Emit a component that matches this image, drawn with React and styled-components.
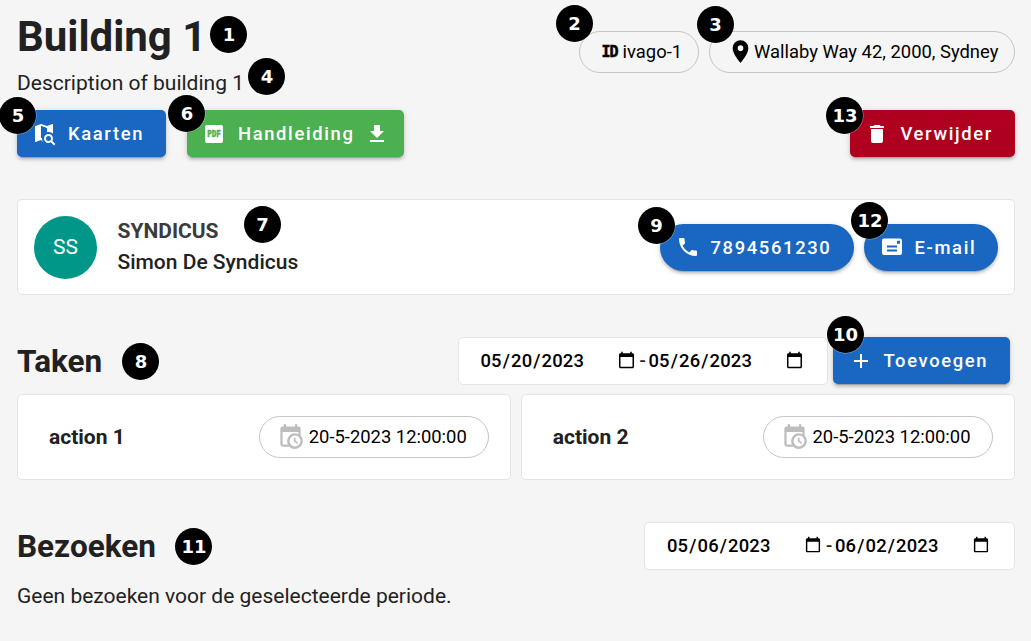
import React from 'react';
import styled, { createGlobalStyle } from 'styled-components';

const GlobalStyle = createGlobalStyle`
  * { box-sizing: border-box; }
  body { margin: 0; background: #f5f5f5; color: #212121; font-family: Roboto, sans-serif; overflow: hidden; }
  h1, h2, p { margin: 0; }
`;

const Page = styled.main`
  width: 1031px;
  height: 641px;
  padding: 10px 16.5px 0 17px;
  background: #f5f5f5;
`;
const Header = styled.header`
  display: flex;
  justify-content: space-between;
  height: 100px;
`;
const Title = styled.h1`
  font-size: 42px;
  line-height: 52px;
  padding-top: 1px;
  font-weight: 700;
`;
const Description = styled.p`
  font-size: 21px;
  line-height: 32px;
  margin-top: ${p => p.$top || 4}px;
`;
const Chips = styled.div`
  display: flex;
  gap: 10px;
  padding-top: 21px;
`;
const Chip = styled.div`
  position: relative;
  display: flex;
  align-items: center;
  gap: ${p => p.$gap || 5}px;
  width: ${p => p.$width}px;
  height: 42px;
  padding-left: ${p => p.$pad}px;
  padding-bottom: 1px;
  border: 1px solid #c6c6c6;
  border-radius: 21px;
  color: #000;
  font-size: 18.4px;
  white-space: nowrap;
`;
const Row = styled.div`
  display: flex;
  align-items: center;
  gap: ${p => p.$gap || 0}px;
`;
const Spread = styled(Row)`
  justify-content: space-between;
`;
const tones = { blue: '#1967c0', green: '#4caf50', red: '#b00020' };
const Button = styled.button`
  position: relative;
  display: flex;
  align-items: center;
  width: ${p => p.$width}px;
  height: 47px;
  padding: 0 0 0 ${p => p.$pad || 16}px;
  border: 0;
  border-radius: ${p => (p.$round ? 24 : 5)}px;
  background: ${p => tones[p.$tone || 'blue']};
  color: #fff;
  font: 500 18.4px Roboto, sans-serif;
  letter-spacing: 1.64px;
  white-space: nowrap;
  box-shadow: 0 4px 1px -3px rgba(0,0,0,.2), 0 3px 3px rgba(0,0,0,.14), 0 1px 6px rgba(0,0,0,.12);
`;
const Label = styled.span`
  margin: 0 ${p => p.$right || 0}px 0 ${p => p.$left || 11}px;
`;
const Badge = styled.span`
  position: absolute;
  left: ${p => p.$x}px;
  top: ${p => p.$y}px;
  width: 37px;
  height: 37px;
  border-radius: 50%;
  background: #000;
  box-shadow: 0 0 0 .5px rgba(255,255,255,.5);
  color: #fff;
  font: 700 18px/37px "DejaVu Sans", sans-serif;
  letter-spacing: 0;
  text-align: center;
  padding-left: 1px;
`;
const Anchor = styled.div`
  position: relative;
  width: fit-content;
`;
const Card = styled.section`
  display: flex;
  align-items: center;
  justify-content: space-between;
  border: 1px solid #e4e4e4;
  border-radius: 5px;
  background: #fff;
`;
const ContactCard = styled(Card)`
  height: 96px;
  margin-top: 42px;
  padding: 0 16px;
`;
const Avatar = styled.div`
  width: 63px;
  height: 63px;
  border-radius: 50%;
  background: #009688;
  color: #fff;
  font-size: 21px;
  line-height: 63px;
  text-align: center;
`;
const Person = styled.div`
  position: relative;
  font-size: 21px;
  font-weight: 500;
  line-height: 31.5px;
`;
const Role = styled.div`
  font-weight: 700;
  color: #3b3b3b;
`;
const SectionHead = styled(Spread)`
  height: 48px;
  margin-top: 42px;
  padding-right: ${p => p.$right || 0}px;
`;
const Heading = styled.h2`
  font-size: 31.5px;
  line-height: 42px;
  padding-top: 1px;
  font-weight: 700;
`;
const Filters = styled(Row)`
  align-items: flex-start;
`;
const DateRange = styled(Card)`
  width: ${p => p.$width}px;
  height: 48px;
  padding: 0 0 2px 21px;
  justify-content: flex-start;
  font-size: 18.4px;
  font-weight: 500;
`;
const DateInput = styled.input`
  width: 158px;
  padding: 0;
  margin: 0;
  border: 0;
  background: transparent;
  color: #000;
  font: 500 18.4px Roboto, sans-serif;
  letter-spacing: .15px;
`;
const Dash = styled.span`
  width: 10px;
  text-align: center;
`;
const Tasks = styled.div`
  display: grid;
  grid-template-columns: 1fr 1fr;
  gap: 10px;
  margin-top: 9px;
`;
const Task = styled(Card)`
  height: 86px;
  padding: 0 21px 0 31px;
  font-size: 21px;
  font-weight: 700;
`;
const TaskChip = styled(Chip)`
  font-weight: 400;
`;
const Svg = styled.svg`
  display: block;
  flex: none;
  fill: currentColor;
`;
const ClockTint = styled.span`
  color: #bdbdbd;
`;
const IdMark = styled.span`
  font: 700 15px "DejaVu Sans Mono", monospace;
  letter-spacing: -1px;
  -webkit-text-stroke: .5px #000;
`;

const paths = {
  marker: 'M12,11.5A2.5,2.5 0 0,1 9.5,9A2.5,2.5 0 0,1 12,6.5A2.5,2.5 0 0,1 14.5,9A2.5,2.5 0 0,1 12,11.5M12,2A7,7 0 0,0 5,9C5,14.25 12,22 12,22C12,22 19,14.25 19,9A7,7 0 0,0 12,2Z',
  trash: 'M19,4H15.5L14.5,3H9.5L8.5,4H5V6H19M6,19A2,2 0 0,0 8,21H16A2,2 0 0,0 18,19V7H6V19Z',
  download: 'M5,20H19V18H5M19,9H15V3H9V9H5L12,16L19,9Z',
  phone: 'M6.62,10.79C8.06,13.62 10.38,15.94 13.21,17.38L15.41,15.18C15.69,14.9 16.08,14.82 16.43,14.93C17.55,15.3 18.75,15.5 20,15.5A1,1 0 0,1 21,16.5V20A1,1 0 0,1 20,21A17,17 0 0,1 3,4A1,1 0 0,1 4,3H7.5A1,1 0 0,1 8.5,4C8.5,5.25 8.7,6.45 9.07,7.57C9.18,7.92 9.1,8.31 8.82,8.59L6.62,10.79Z',
  clock: 'M15,13H16.5V15.82L18.94,17.23L18.19,18.53L15,16.69V13M19,8H5V19H9.67C9.24,18.09 9,17.07 9,16A7,7 0 0,1 16,9C17.07,9 18.09,9.24 19,9.67V8M5,21C3.89,21 3,20.1 3,19V5C3,3.89 3.89,3 5,3H6V1H8V3H16V1H18V3H19A2,2 0 0,1 21,5V11.1C22.24,12.36 23,14.09 23,16A7,7 0 0,1 16,23C14.09,23 12.36,22.24 11.1,21H5M16,11.15A4.85,4.85 0 0,0 11.15,16C11.15,18.68 13.32,20.85 16,20.85A4.85,4.85 0 0,0 20.85,16C20.85,13.32 18.68,11.15 16,11.15Z',
  plus: 'M19,13H13V19H11V13H5V11H11V5H13V11H19V13Z',
  mail: 'M4 3.5H20A2 2 0 0 1 22 5.5V18A2 2 0 0 1 20 20H4A2 2 0 0 1 2 18V5.5A2 2 0 0 1 4 3.5M17 5.8V8.8H20V5.8H17M7 10.6V12.4H17V10.6H7M7 14.6V16.4H17V14.6H7Z',
  map: 'M15.5,12C18,12 20,14 20,16.5C20,17.38 19.75,18.21 19.31,18.9L22.39,22L21,23.39L17.88,20.32C17.19,20.75 16.37,21 15.5,21C13,21 11,19 11,16.5C11,14 13,12 15.5,12M15.5,14A2.5,2.5 0 0,0 13,16.5A2.5,2.5 0 0,0 15.5,19A2.5,2.5 0 0,0 18,16.5A2.5,2.5 0 0,0 15.5,14M19.5,2A.5,.5 0 0,1 20,2.5V11.81C18.83,10.69 17.25,10 15.5,10C15,10 14.5,10.06 14,10.17V5.9L8,3.8V16L9,16.35C9,17.7 9.4,18.9 10.1,19.9L8,18L2.66,20.07L2.5,20.1A.5,.5 0 0,1 2,19.6V4.5C2,4.27 2.15,4.09 2.36,4.03L8,2L14,4.1L19.34,2.03Z',
};
const Icon = ({ name, size = 24 }) => (
  <Svg viewBox="0 0 24 24" width={size} height={size} fillRule="evenodd"><path d={paths[name]} /></Svg>
);
const PdfIcon = () => (
  <Svg viewBox="0 0 24 24" width="24" height="24">
    <rect x="3" y="3" width="18" height="18" rx="2" />
    <text x="12" y="15" textAnchor="middle" textLength="13.5" lengthAdjust="spacingAndGlyphs" fill="#4caf50" stroke="#4caf50" strokeWidth=".5" fontFamily="DejaVu Sans Mono" fontSize="8.5" fontWeight="700" letterSpacing="0">PDF</text>
  </Svg>
);

const Range = ({ from, to, width }) => (
  <DateRange $width={width}>
    <DateInput type="date" defaultValue={from} />
    <Dash>-</Dash>
    <DateInput type="date" defaultValue={to} />
  </DateRange>
);

const TaskCard = ({ name }) => (
  <Task>
    <span>{name}</span>
    <TaskChip $width={230} $pad={17} $gap={5}>
      <ClockTint><Icon name="clock" size={27} /></ClockTint>
      20-5-2023 12:00:00
    </TaskChip>
  </Task>
);

export default function App() {
  return (
    <Page>
      <GlobalStyle />
      <Header>
        <div>
          <Anchor><Title>Building 1</Title><Badge $x={193} $y={6}>1</Badge></Anchor>
          <Anchor><Description>Description of building 1</Description><Badge $x={231} $y={-9}>4</Badge></Anchor>
        </div>
        <Chips>
          <Chip $width={120} $pad={22}><IdMark>ID</IdMark>ivago-1<Badge $x={-24} $y={-27}>2</Badge></Chip>
          <Chip $width={306} $pad={17} $gap={0.5}><Icon name="marker" size={27} />Wallaby Way 42, 2000, Sydney<Badge $x={-13} $y={-26}>3</Badge></Chip>
        </Chips>
      </Header>
      <Spread>
        <Row $gap={21}>
          <Button $width={149}><Icon name="map" /><Label>Kaarten</Label><Badge $x={-18} $y={-13}>5</Badge></Button>
          <Button $width={217} $pad={15} $tone="green"><PdfIcon /><Label $left={12} $right={10}>Handleiding</Label><Icon name="download" /><Badge $x={-19} $y={-15}>6</Badge></Button>
        </Row>
        <Button $width={165} $pad={15} $tone="red"><Icon name="trash" /><Label $left={12}>Verwijder</Label><Badge $x={-23.5} $y={-13.5}>13</Badge></Button>
      </Spread>
      <ContactCard>
        <Row $gap={20.5}>
          <Avatar>SS</Avatar>
          <Person><Role>SYNDICUS</Role>Simon De Syndicus<Badge $x={126} $y={-10}>7</Badge></Person>
        </Row>
        <Row $gap={10}>
          <Button $round $width={194}><Icon name="phone" /><Label>7894561230</Label><Badge $x={-22} $y={-17}>9</Badge></Button>
          <Button $round $width={134}><Icon name="mail" /><Label>E-mail</Label><Badge $x={-12.5} $y={-21.5}>12</Badge></Button>
        </Row>
      </ContactCard>
      <SectionHead $right={5}>
        <Anchor><Heading>Taken</Heading><Badge $x={105} $y={3.5}>8</Badge></Anchor>
        <Filters $gap={5}>
          <Range from="2023-05-20" to="2023-05-26" width={370} />
          <Button $width={177}><Icon name="plus" /><Label>Toevoegen</Label><Badge $x={-6} $y={-21}>10</Badge></Button>
        </Filters>
      </SectionHead>
      <Tasks><TaskCard name="action 1" /><TaskCard name="action 2" /></Tasks>
      <SectionHead>
        <Anchor><Heading>Bezoeken</Heading><Badge $x={158} $y={3.5}>11</Badge></Anchor>
        <Range from="2023-05-06" to="2023-06-02" width={370.5} />
      </SectionHead>
      <Description $top={9.5}>Geen bezoeken voor de geselecteerde periode.</Description>
    </Page>
  );
}
